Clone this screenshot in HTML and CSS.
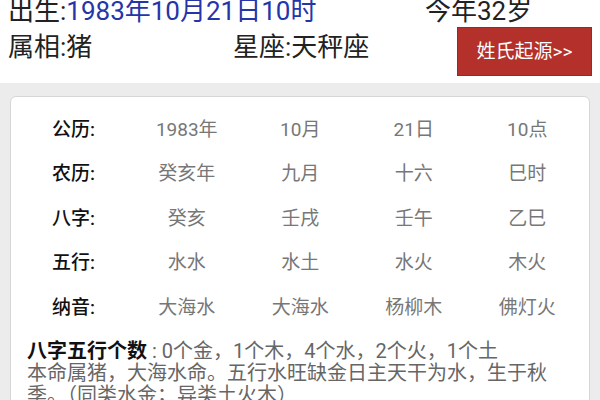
FILE: index.html
```html
<!DOCTYPE html>
<html lang="zh-CN">
<head>
    <meta charset="UTF-8">
    <meta name="viewport" content="width=device-width, initial-scale=1.0">
    <title>八字五行</title>
    <link rel="stylesheet" href="styles.css">
</head>
<body>
    <div class="header">
        <div class="header-row">
            <div class="birth">出生:<span class="date">1983年10月21日10时</span></div>
            <div class="age">今年32岁</div>
        </div>
        <div class="header-row">
            <div class="zodiac">属相:猪</div>
            <div class="star">星座:天秤座</div>
            <a class="surname-btn">姓氏起源&gt;&gt;</a>
        </div>
    </div>

    <div class="main">
        <div class="card">
            <div class="bazi-table">
                <div class="label">公历:</div>
                <div class="cell">1983年</div>
                <div class="cell">10月</div>
                <div class="cell">21日</div>
                <div class="cell">10点</div>

                <div class="label">农历:</div>
                <div class="cell">癸亥年</div>
                <div class="cell">九月</div>
                <div class="cell">十六</div>
                <div class="cell">巳时</div>

                <div class="label">八字:</div>
                <div class="cell">癸亥</div>
                <div class="cell">壬戌</div>
                <div class="cell">壬午</div>
                <div class="cell">乙巳</div>

                <div class="label">五行:</div>
                <div class="cell">水水</div>
                <div class="cell">水土</div>
                <div class="cell">水火</div>
                <div class="cell">木火</div>

                <div class="label">纳音:</div>
                <div class="cell">大海水</div>
                <div class="cell">大海水</div>
                <div class="cell">杨柳木</div>
                <div class="cell">佛灯火</div>
            </div>
            <p class="summary"><b>八字五行个数</b> : 0个金，1个木，4个水，2个火，1个土<br>本命属猪，大海水命。五行水旺缺金日主天干为水，生于秋季。（同类水金；异类土火木）</p>
        </div>
    </div>
</body>
</html>
```

FILE: styles.css
```css
body {
    margin: 0;
    background: #ffffff;
    font-family: Roboto, "Noto Sans CJK SC", sans-serif;
    overflow: hidden;
}

.header {
    height: 90px;
    margin-top: -7px;
    padding-left: 8px;
    box-sizing: border-box;
    color: #222;
    font-size: 26px;
    line-height: 36px;
}

.header-row {
    display: flex;
    align-items: flex-start;
}

.birth {
    width: 417px;
}

.date {
    color: #2535a8;
}

.zodiac {
    width: 225px;
}

.star {
    width: 224px;
}

.surname-btn {
    width: 135px;
    height: 49px;
    margin-top: -2px;
    background: #b4302a;
    border: 1px solid #9c2820;
    box-sizing: border-box;
    color: #fff;
    font-size: 19px;
    line-height: 47px;
    text-align: center;
}

.main {
    background: #ececec;
    padding: 13px 10px 0;
    height: 320px;
}

.card {
    background: #fff;
    border: 1px solid #d6d6d6;
    border-radius: 6px;
    padding: 8px 30px 20px 16px;
}

.bazi-table {
    display: grid;
    grid-template-columns: 78px repeat(4, 113.5px);
    grid-auto-rows: 44.5px;
    margin-left: 25px;
    align-items: center;
    font-size: 19px;
}

.label {
    color: #111;
    font-weight: 500;
}

.cell {
    color: #777;
    text-align: center;
}

.summary {
    margin: 12px 0 0;
    font-size: 20px;
    line-height: 22px;
    color: #666;
}

.summary b {
    color: #111;
}
```
